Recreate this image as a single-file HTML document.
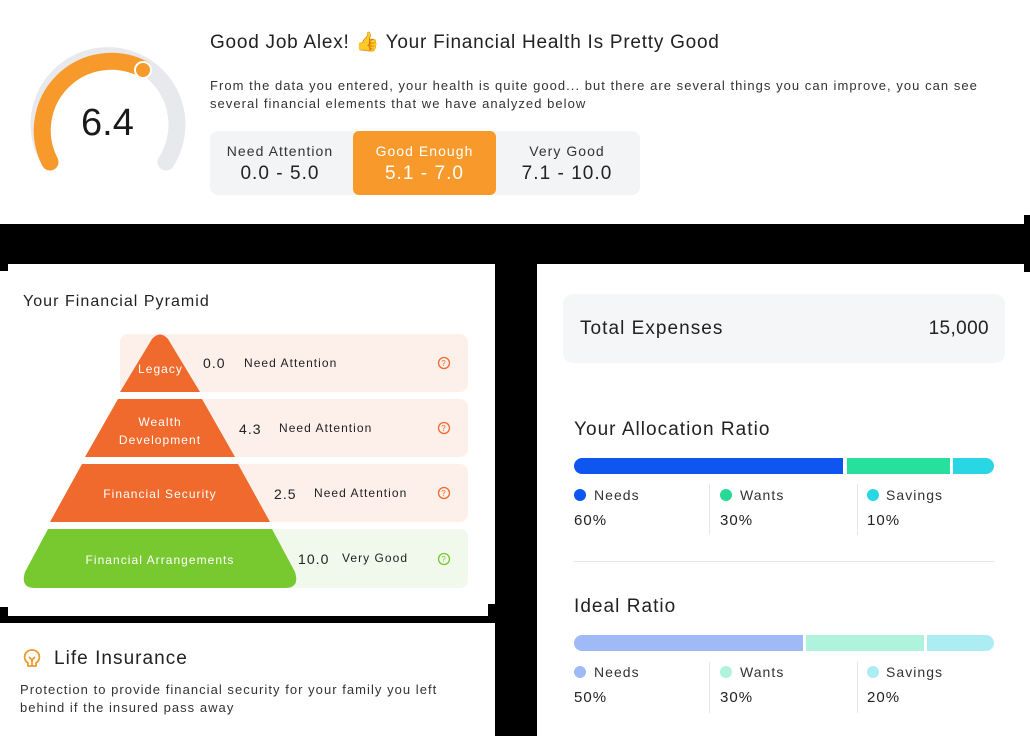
<!DOCTYPE html>
<html><head><meta charset="utf-8"><style>
*{margin:0;padding:0;box-sizing:border-box}
body{width:1030px;height:736px;background:#000;position:relative;overflow:hidden;font-family:"Liberation Sans",sans-serif;color:#222;letter-spacing:0.065em}
.a{position:absolute}
.card{position:absolute;background:#fff}
.t{position:absolute;white-space:nowrap}
.dot{position:absolute;width:12px;height:12px;border-radius:50%}
.vl{position:absolute;width:1px;background:#e6e6e6}
</style></head><body>
<div class="card" style="left:0;top:0;width:1024px;height:224px"></div>
<div class="card" style="left:1024px;top:0;width:6px;height:215px"></div>

<svg class="a" style="left:0;top:0" width="200" height="200">
<path d="M50 162 A69 69 0 1 1 166 162" fill="none" stroke="#e8e9ec" stroke-width="17" stroke-linecap="round"/>
<path d="M50 162 A69 69 0 0 1 143 69" fill="none" stroke="#f79a2b" stroke-width="17" stroke-linecap="round"/>
<circle cx="143" cy="70" r="8" fill="#f79a2b" stroke="#fff" stroke-width="2"/>
</svg>
<div class="t" style="left:81px;top:102px;font-size:38px;color:#1a1a1a;letter-spacing:0">6.4</div>

<div class="t" style="left:210px;top:30px;font-size:19px;color:#222;letter-spacing:0.04em">Good Job Alex! 👍 Your Financial Health Is Pretty Good</div>
<div class="t" style="left:210px;top:77px;font-size:13px;line-height:18px;color:#333">From the data you entered, your health is quite good... but there are several things you can improve, you can see<br>several financial elements that we have analyzed below</div>
<div class="a" style="left:210px;top:131px;width:430px;height:64px;background:#f3f4f5;border-radius:8px"></div>
<div class="a" style="left:353px;top:131px;width:143px;height:64px;background:#f79a2b;border-radius:6px"></div>
<div class="t" style="left:210px;width:140px;text-align:center;top:143px;font-size:14px;color:#333">Need Attention</div>
<div class="t" style="left:210px;width:140px;text-align:center;top:163px;font-size:19px;color:#222">0.0 - 5.0</div>
<div class="t" style="left:353px;width:143px;text-align:center;top:143px;font-size:14px;color:#fff">Good Enough</div>
<div class="t" style="left:353px;width:143px;text-align:center;top:163px;font-size:19px;color:#fff">5.1 - 7.0</div>
<div class="t" style="left:497px;width:140px;text-align:center;top:143px;font-size:14px;color:#333">Very Good</div>
<div class="t" style="left:497px;width:140px;text-align:center;top:163px;font-size:19px;color:#222">7.1 - 10.0</div>

<!-- pyramid card -->
<div class="card" style="left:0;top:264px;width:495px;height:352px"></div>
<div class="a" style="left:0;top:264px;width:8px;height:7px;background:#000"></div>
<div class="a" style="left:0;top:607px;width:8px;height:9px;background:#000"></div>
<div class="a" style="left:488px;top:604px;width:7px;height:12px;background:#000"></div>
<div class="t" style="left:23px;top:293px;font-size:16px;color:#222">Your Financial Pyramid</div>
<div class="a" style="left:120px;top:334px;width:348px;height:58px;background:#fdf0ea;border-radius:8px"></div>
<div class="a" style="left:120px;top:399px;width:348px;height:58px;background:#fdf0ea;border-radius:8px"></div>
<div class="a" style="left:120px;top:464px;width:348px;height:58px;background:#fdf0ea;border-radius:8px"></div>
<div class="a" style="left:120px;top:529px;width:348px;height:59px;background:#f1f8ec;border-radius:8px"></div>
<svg class="a" style="left:0;top:0" width="495" height="620">
<path d="M152 339 Q160 330 168 339 L200 392 L120 392 Z" fill="#ef6a2c"/>
<polygon points="118,399 202,399 235,457 85,457" fill="#ef6a2c"/>
<polygon points="82,464 238,464 270,522 50,522" fill="#ef6a2c"/>
<path d="M48 529 L272 529 L295 572 Q300 588 285 588 L35 588 Q20 588 25 572 Z" fill="#77c92f"/>
<g fill="none" stroke="#ef6a2c" stroke-width="1.3"><circle cx="444" cy="363" r="5.5"/><circle cx="444" cy="428" r="5.5"/><circle cx="444" cy="493" r="5.5"/></g>
<circle cx="444" cy="559" r="5.5" fill="none" stroke="#77c92f" stroke-width="1.3"/>
<g font-size="8" fill="#ef6a2c" text-anchor="middle" font-family="Liberation Sans"><text x="444" y="366">?</text><text x="444" y="431">?</text><text x="444" y="496">?</text></g>
<text x="444" y="562" font-size="8" fill="#77c92f" text-anchor="middle" font-family="Liberation Sans">?</text>
</svg>
<div class="t" style="left:120px;width:81px;text-align:center;top:362px;font-size:12px;color:#fff">Legacy</div>
<div class="t" style="left:100px;width:120px;text-align:center;top:413px;font-size:12px;line-height:18px;color:#fff">Wealth<br>Development</div>
<div class="t" style="left:60px;width:200px;text-align:center;top:487px;font-size:12px;color:#fff">Financial Security</div>
<div class="t" style="left:40px;width:240px;text-align:center;top:553px;font-size:12px;color:#fff">Financial Arrangements</div>
<div class="t" style="left:203px;top:355px;font-size:14px">0.0</div><div class="t" style="left:244px;top:356px;font-size:12px">Need Attention</div>
<div class="t" style="left:239px;top:421px;font-size:14px">4.3</div><div class="t" style="left:279px;top:421px;font-size:12px">Need Attention</div>
<div class="t" style="left:274px;top:486px;font-size:14px">2.5</div><div class="t" style="left:314px;top:486px;font-size:12px">Need Attention</div>
<div class="t" style="left:298px;top:551px;font-size:14px">10.0</div><div class="t" style="left:342px;top:551px;font-size:12px">Very Good</div>

<!-- life insurance -->
<div class="card" style="left:0;top:623px;width:495px;height:113px"></div>
<svg class="a" style="left:22px;top:648px" width="20" height="22"><path d="M10 2 A7 7 0 0 1 14 15 L14 18 L6 18 L6 15 A7 7 0 0 1 10 2 Z M7 9 L10 12 L13 9 M10 12 L10 18" fill="none" stroke="#f0992a" stroke-width="1.8" stroke-linejoin="round"/></svg>
<div class="t" style="left:54px;top:648px;font-size:19px;color:#222">Life Insurance</div>
<div class="t" style="left:20px;top:681px;font-size:13px;line-height:18px;color:#333">Protection to provide financial security for your family you left<br>behind if the insured pass away</div>

<!-- right card -->
<div class="card" style="left:537px;top:264px;width:493px;height:472px"></div>
<div class="a" style="left:1024px;top:264px;width:6px;height:8px;background:#000"></div>
<div class="a" style="left:563px;top:294px;width:442px;height:69px;background:#f5f6f7;border-radius:10px"></div>
<div class="t" style="left:580px;top:318px;font-size:19px;color:#222">Total Expenses</div>
<div class="t" style="right:41px;top:318px;font-size:19px;color:#222;letter-spacing:0.02em">15,000</div>

<div class="t" style="left:574px;top:419px;font-size:19px;color:#222">Your Allocation Ratio</div>
<div class="a" style="left:574px;top:458px;width:269px;height:16px;background:#0f55f0;border-radius:8px 0 0 8px"></div>
<div class="a" style="left:847px;top:458px;width:103px;height:16px;background:#28e09d"></div>
<div class="a" style="left:953px;top:458px;width:41px;height:16px;background:#29d6e3;border-radius:0 8px 8px 0"></div>
<div class="dot" style="left:574px;top:489px;background:#0f55f0"></div><div class="t" style="left:594px;top:487px;font-size:14px;color:#333">Needs</div>
<div class="t" style="left:574px;top:512px;font-size:15px">60%</div>
<div class="vl" style="left:709px;top:484px;height:51px"></div>
<div class="dot" style="left:720px;top:489px;background:#28d897"></div><div class="t" style="left:740px;top:487px;font-size:14px;color:#333">Wants</div>
<div class="t" style="left:720px;top:512px;font-size:15px">30%</div>
<div class="vl" style="left:857px;top:484px;height:51px"></div>
<div class="dot" style="left:867px;top:489px;background:#29d6e3"></div><div class="t" style="left:886px;top:487px;font-size:14px;color:#333">Savings</div>
<div class="t" style="left:867px;top:512px;font-size:15px">10%</div>
<div class="a" style="left:574px;top:561px;width:420px;height:1px;background:#e6e6e6"></div>

<div class="t" style="left:574px;top:596px;font-size:19px;color:#222">Ideal Ratio</div>
<div class="a" style="left:574px;top:635px;width:229px;height:16px;background:#a0baf8;border-radius:8px 0 0 8px"></div>
<div class="a" style="left:806px;top:635px;width:118px;height:16px;background:#aff3dc"></div>
<div class="a" style="left:927px;top:635px;width:67px;height:16px;background:#acedf3;border-radius:0 8px 8px 0"></div>
<div class="dot" style="left:574px;top:666px;background:#a0baf8"></div><div class="t" style="left:594px;top:664px;font-size:14px;color:#333">Needs</div>
<div class="t" style="left:574px;top:689px;font-size:15px">50%</div>
<div class="vl" style="left:709px;top:662px;height:51px"></div>
<div class="dot" style="left:720px;top:666px;background:#aff3dc"></div><div class="t" style="left:740px;top:664px;font-size:14px;color:#333">Wants</div>
<div class="t" style="left:720px;top:689px;font-size:15px">30%</div>
<div class="vl" style="left:857px;top:662px;height:51px"></div>
<div class="dot" style="left:867px;top:666px;background:#acedf3"></div><div class="t" style="left:886px;top:664px;font-size:14px;color:#333">Savings</div>
<div class="t" style="left:867px;top:689px;font-size:15px">20%</div>
</body></html>
